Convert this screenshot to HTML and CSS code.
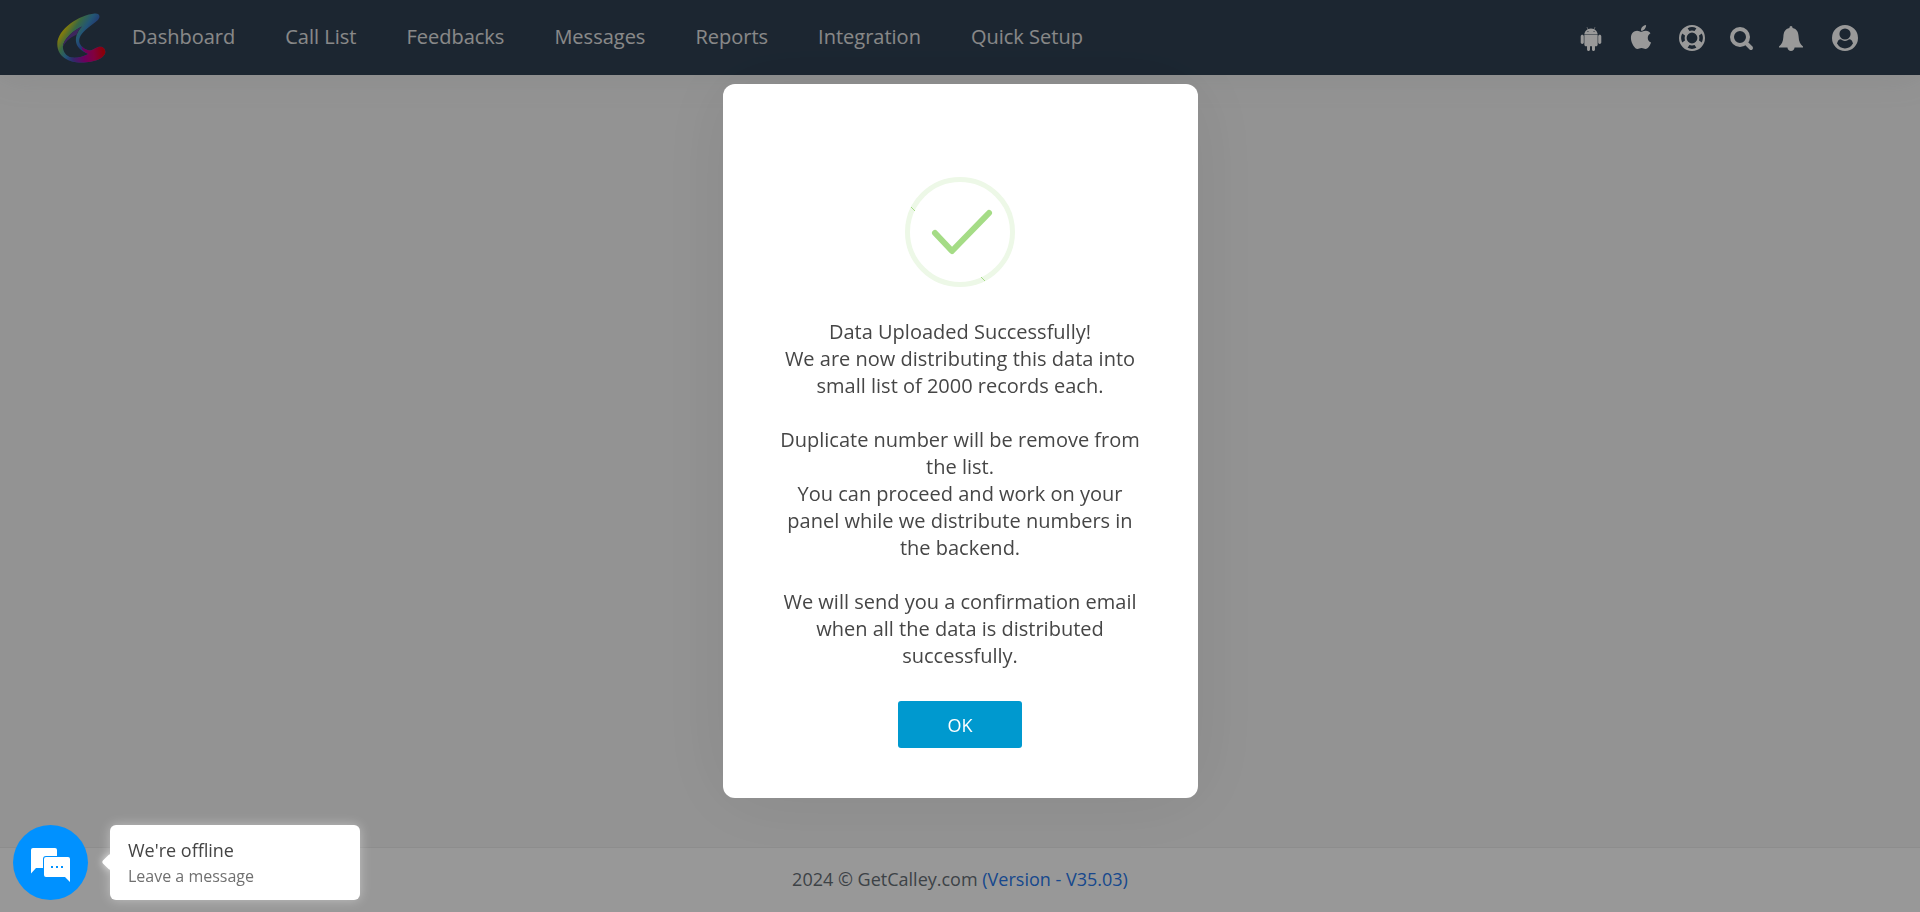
FILE: index.html
```html
<!DOCTYPE html>
<html lang="en">
    <head>
        <meta charset="UTF-8">
        <title>GetCalley</title>
        <link rel="stylesheet" href="styles.css">
    </head>
    <body>

        <!-- Top bar -->
        <header class="topbar">
            <a class="logo" href="#" aria-label="GetCalley">
                <svg viewBox="50 35 150 152">
                    <defs>
                        <linearGradient id="ring" gradientUnits="userSpaceOnUse" x1="60" y1="80" x2="165" y2="150">
                            <stop offset="0" stop-color="#ffe600"/>
                            <stop offset="0.14" stop-color="#c8c820"/>
                            <stop offset="0.3" stop-color="#5fae72"/>
                            <stop offset="0.5" stop-color="#3b8fc4"/>
                            <stop offset="0.68" stop-color="#3a60c0"/>
                            <stop offset="1" stop-color="#3a60c0"/>
                        </linearGradient>
                        <linearGradient id="tail" gradientUnits="userSpaceOnUse" x1="75" y1="165" x2="190" y2="150">
                            <stop offset="0" stop-color="#3b6fc4" stop-opacity="0"/>
                            <stop offset="0.2" stop-color="#5a3fb0"/>
                            <stop offset="0.5" stop-color="#b5009c"/>
                            <stop offset="0.75" stop-color="#d8006a"/>
                            <stop offset="1" stop-color="#e60012"/>
                        </linearGradient>
                    </defs>
                    <path fill="url(#ring)" fill-rule="evenodd" d="M165 36C120 40 51 82 51 130C51 168 85 186 125 186C165 186 198 172 198 153C198 142 187 135 175 139C160 144 155 152 144 148C128 142 117 130 118 118C119 100 138 84 160 68C172 59 180 53 180 45C180 38 174 35 165 36ZM126 76C112 92 107 106 108 120C109 138 123 150 146 160C130 168 112 173 95 171C78 168 68 153 68 138C70 114 100 88 126 76Z"/>
                    <path fill="url(#tail)" d="M68 170C84 182 104 186 125 186C165 186 198 172 198 153C198 142 187 135 175 139C160 144 155 152 144 148C137 146 130 142 126 137C124 148 135 155 146 160C130 168 112 173 95 171C85 170 78 166 74 160Z"/>
                    <path fill="#66409c" d="M126 76C100 88 70 114 68 138C78 118 96 106 110 101C114 90 119 83 126 76Z"/>
                </svg>
            </a>
            <nav class="menu">
                <a href="#">Dashboard</a>
                <a href="#">Call List</a>
                <a href="#">Feedbacks</a>
                <a href="#">Messages</a>
                <a href="#">Reports</a>
                <a href="#">Integration</a>
                <a href="#">Quick Setup</a>
            </nav>
            <div class="tools">
                <a href="#" aria-label="Android app">
                    <svg viewBox="32 -5 384 485"><path d="M89.6 204.5v115.8c0 15.4-12.1 27.7-27.5 27.7-15.3 0-30.1-12.4-30.1-27.7V204.5c0-15.1 14.8-27.5 30.1-27.5 15.1 0 27.5 12.4 27.5 27.5zm10.8 157c0 16.4 13.2 29.6 29.6 29.6h19.9l.3 61.1c0 36.9 55.2 36.6 55.2 0v-61.1h37.2v61.1c0 36.7 55.5 36.8 55.5 0v-61.1h20.2c16.2 0 29.4-13.2 29.4-29.6V182.1H100.4v179.4zm248-189.1H99.3c0-42.8 25.6-80 63.6-99.4l-19.1-35.3c-2.8-4.9 4.3-8 6.7-3.8l19.4 35.6c34.9-15.5 75-14.7 108.3 0L297.5 34c2.5-4.3 9.5-1.1 6.7 3.8L285.1 73c37.7 19.4 63.3 56.6 63.3 99.4zm-170.7-55.5c0-5.7-4.6-10.5-10.5-10.5-5.7 0-10.2 4.8-10.2 10.5s4.6 10.5 10.2 10.5c5.9 0 10.5-4.8 10.5-10.5zm113.4 0c0-5.7-4.6-10.5-10.2-10.5-5.9 0-10.5 4.8-10.5 10.5s4.6 10.5 10.5 10.5c5.6 0 10.2-4.8 10.2-10.5zm94.8 60.1c-15.1 0-27.5 12.1-27.5 27.5v115.8c0 15.4 12.4 27.7 27.5 27.7 15.4 0 30.1-12.4 30.1-27.7V204.5c0-15.4-14.8-27.5-30.1-27.5z"/></svg>
                </a>
                <a href="#" aria-label="iPhone app">
                    <svg viewBox="4 32 376 485"><path d="M318.7 268.7c-.2-36.7 16.4-64.4 50-84.8-18.8-26.9-47.2-41.7-84.7-44.6-35.5-2.8-74.3 20.7-88.5 20.7-15 0-49.4-19.7-76.4-19.7C63.3 141.2 4 184.8 4 273.5q0 39.3 14.4 81.2c12.8 36.7 59 126.7 107.2 125.2 25.2-.6 43-17.9 75.8-17.9 31.8 0 48.3 17.9 76.4 17.9 48.6-.7 90.4-82.5 102.6-119.3-65.2-30.7-61.7-90-61.7-91.9zm-56.6-164.2c27.3-32.4 24.8-61.9 24-72.5-24.1 1.4-52 16.4-67.9 34.9-17.5 19.8-27.8 44.3-25.6 71.9 26.1 2 49.9-11.4 69.5-34.3z"/></svg>
                </a>
                <a href="#" aria-label="Support">
                    <svg viewBox="-1 0 26 26">
                        <path fill-rule="evenodd" d="M13 0a13 13 0 1 0 0 26a13 13 0 1 0 0-26zM13 7.6a5.4 5.4 0 1 1 0 10.8a5.4 5.4 0 1 1 0-10.8zM8.6 3.2Q13 1 17.4 3.2L15.6 6Q13 5.2 10.4 6zM8.6 22.8Q13 25 17.4 22.8L15.6 20Q13 20.8 10.4 20zM3.2 8.6Q1 13 3.2 17.4L6 15.6Q5.2 13 6 10.4zM22.8 8.6Q25 13 22.8 17.4L20 15.6Q20.8 13 20 10.4z"/>
                    </svg>
                </a>
                <a href="#" aria-label="Search">
                    <svg viewBox="0 0 26 26">
                        <circle cx="12" cy="12" r="8" fill="none" stroke="currentColor" stroke-width="4"/>
                        <path d="M18 18L23 23" stroke="currentColor" stroke-width="4" stroke-linecap="round"/>
                    </svg>
                </a>
                <a href="#" aria-label="Notifications">
                    <svg viewBox="0 0 26 26">
                        <path d="M13 1Q14.6 1 14.6 3C18.8 4 20.4 7 20.6 11.5C20.8 16.5 22.4 19.6 25 21.4V22.6H16.6Q16 26 13 26T9.4 22.6H1V21.4C3.6 19.6 5.2 16.5 5.4 11.5C5.600 7 7.200 4 11.400 3Q11.400 1 13 1z"/>
                    </svg>
                </a>
                <a class="account" href="#" aria-label="Account">
                    <svg viewBox="0 0 26 26">
                        <path fill-rule="evenodd" d="M13 0a13 13 0 1 0 0 26a13 13 0 1 0 0-26zM13 3.400a5.600 5.600 0 1 1 0 11.200a5.600 5.600 0 1 1 0-11.200zM5 18.500Q6 14.200 8.800 14.200Q13 17.800 17.200 14.200Q20 14.200 21 18.500Q18 23.400 13 23.400T5 18.500z"/>
                    </svg>
                </a>
            </div>
        </header>

        <main class="content"></main>

        <footer class="footer">
            <span>2024 © GetCalley.com <a href="#">(Version - V35.03)</a></span>
        </footer>

        <!-- Upload confirmation -->
        <div class="overlay">
            <div class="modal" role="dialog" aria-modal="true">
                <svg class="success" viewBox="0 0 110 110">
                    <circle cx="55" cy="55" r="52.500" fill="none" stroke="#edf8e7" stroke-width="5"/>
                    <path d="M6 30L10 34M76 100L80 104" stroke="#a5dc86" stroke-width="1"/>
                    <path d="M30 56L47 74L84 36" fill="none" stroke="#a5dc86" stroke-width="6" stroke-linecap="round" stroke-linejoin="round"/>
                </svg>
                <div class="message">
                    <p>Data Uploaded Successfully!<br>We are now distributing this data into small list of 2000 records each.</p>
                    <p>Duplicate number will be remove from the list.<br>You can proceed and work on your panel while we distribute numbers in the backend.</p>
                    <p>We will send you a confirmation email when all the data is distributed successfully.</p>
                </div>
                <button class="ok" type="button">OK</button>
            </div>
        </div>

        <!-- Chat widget -->
        <div class="chat">
            <button class="chat-button" type="button" aria-label="Open chat">
                <svg viewBox="0 0 39 34">
                    <path fill="#fff" d="M2 0H24Q26 0 26 2V8H15Q12 8 12 11V20H5L0 25.500V2Q0 0 2 0z"/>
                    <path fill="#fff" d="M15 9H37Q39 9 39 11V34L34 29H15Q13 29 13 27V11Q13 9 15 9z"/>
                    <path fill="#0091ff" d="M20 18h2v2h-2zM25 18h2v2h-2zM30 18h2v2h-2z"/>
                </svg>
            </button>
            <div class="chat-bubble">
                <div class="chat-title">We're offline</div>
                <div class="chat-text">Leave a message</div>
            </div>
        </div>

    </body>
</html>
```

FILE: styles.css
```css
/* Layout for the entire page */
body {
    display: flex;
    flex-direction: column;
    margin: 0;
    min-height: 100vh;
    background-color: #f5f5f5;
    color: #6c757d;
    font-family: "Open Sans", sans-serif;
    font-size: 18px;
}

a {
    color: inherit;
    text-decoration: none;
}

button {
    border: 0;
    padding: 0;
    font-family: inherit;
    cursor: pointer;
}

svg {
    display: block;
}

/* Top bar */
.topbar {
    display: flex;
    align-items: center;
    height: 75px;
    padding: 0 62px 0 57px;
    box-sizing: border-box;
    background-color: #2f4053;
    box-shadow: 0 0 35px rgba(154, 161, 171, 0.15);
}

.logo svg {
    width: 49px;
    height: 50px;
}

.menu {
    display: flex;
    gap: 50px;
    margin-left: 26px;
    padding-bottom: 2px;
    font-size: 20px;
    font-weight: 500;
    color: #e4e4e4;
}

.tools {
    display: flex;
    align-items: center;
    gap: 24px;
    margin-left: auto;
    color: #fff;
}

.tools svg {
    width: 26px;
    height: 26px;
    overflow: visible;
    fill: currentColor;
}

.account {
    margin-left: 4px;
}

.content {
    flex: 1;
}

/* Footer */
.footer {
    height: 65px;
    box-sizing: border-box;
    border-top: 1px solid #ececec;
    background-color: #fefefe;
    color: #666e76;
    line-height: 62px;
    text-align: center;
}

.footer a {
    color: #2878eb;
}

/* Modal */
.overlay {
    position: fixed;
    inset: 0;
    display: flex;
    align-items: center;
    justify-content: center;
    padding-bottom: 30px;
    background-color: rgba(0, 0, 0, 0.4);
}

.modal {
    display: flex;
    flex-direction: column;
    align-items: center;
    width: 475px;
    padding: 93px 52px 50px;
    box-sizing: border-box;
    border-radius: 12px;
    background-color: #fff;
    box-shadow: 0 0 80px rgba(0, 0, 0, 0.08);
}

.success {
    width: 110px;
    height: 110px;
}

.message {
    margin: 31px 0 32px;
    color: #464646;
    font-size: 20px;
    line-height: 27px;
    text-align: center;
}

.message p {
    margin: 0 0 27px;
}

.message p:last-child {
    margin-bottom: 0;
}

.ok {
    width: 124px;
    height: 47px;
    border-radius: 3px;
    background-color: #0099cf;
    color: #fff;
    font-size: 18px;
    font-weight: 500;
}

/* Chat widget */
.chat {
    position: fixed;
    left: 13px;
    bottom: 12px;
    display: flex;
    gap: 22px;
}

.chat-button {
    display: flex;
    align-items: center;
    justify-content: center;
    width: 75px;
    height: 75px;
    border-radius: 50%;
    background-color: #0091ff;
}

.chat-button svg {
    width: 39px;
    height: 34px;
    margin-top: 5px;
}

.chat-bubble {
    position: relative;
    width: 250px;
    height: 75px;
    padding: 12px 18px;
    box-sizing: border-box;
    border-radius: 6px;
    background-color: #fff;
    box-shadow: 0 0 12px rgba(255, 255, 255, 0.4);
}

/* Arrow pointing at the round button */
.chat-bubble::before {
    content: "";
    position: absolute;
    left: -6px;
    top: 31px;
    width: 12px;
    height: 12px;
    border-radius: 2px;
    background-color: #fff;
    box-shadow: 0 0 8px rgba(255, 255, 255, 0.8);
    transform: rotate(45deg);
}

.chat-title {
    color: #444;
    font-size: 18px;
    line-height: 26px;
}

.chat-text {
    color: #707070;
    font-size: 16px;
    line-height: 26px;
}
```
